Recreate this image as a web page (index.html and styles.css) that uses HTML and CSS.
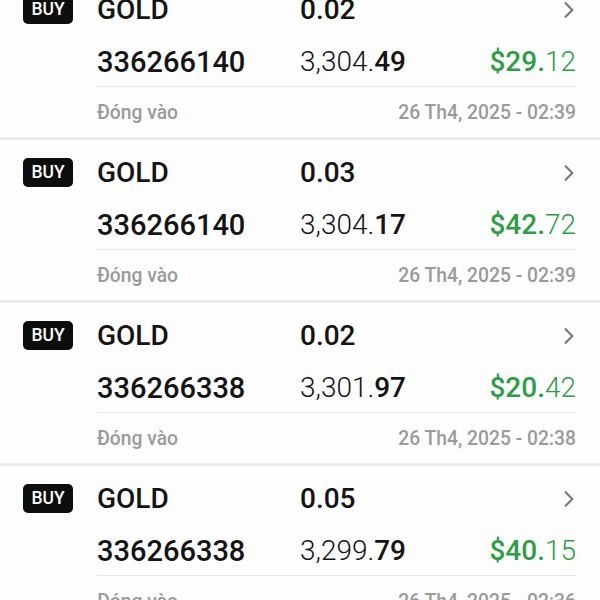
FILE: index.html
```html
<!DOCTYPE html>
<html lang="vi">

<head>
    <meta charset="UTF-8">
    <meta name="viewport" content="width=device-width, initial-scale=1.0">
    <title>Lịch sử giao dịch</title>
    <link rel="stylesheet" href="styles.css">
</head>

<body>
    <main class="history">

        <div class="trade">
            <span class="badge">BUY</span>
            <div class="trade-body">
                <div class="row">
                    <span class="symbol">GOLD</span>
                    <span class="volume">0.02</span>
                    <svg class="chevron" viewBox="0 0 10 16"><path d="M2 2 L8 8 L2 14" /></svg>
                </div>
                <div class="row row-price">
                    <span class="ticket">336266140</span>
                    <span class="price">3,304.<b>49</b></span>
                    <span class="profit"><b>$29.</b>12</span>
                </div>
                <div class="footer">
                    <span>Đóng vào</span>
                    <span>26 Th4, 2025 - 02:39</span>
                </div>
            </div>
        </div>

        <div class="trade">
            <span class="badge">BUY</span>
            <div class="trade-body">
                <div class="row">
                    <span class="symbol">GOLD</span>
                    <span class="volume">0.03</span>
                    <svg class="chevron" viewBox="0 0 10 16"><path d="M2 2 L8 8 L2 14" /></svg>
                </div>
                <div class="row row-price">
                    <span class="ticket">336266140</span>
                    <span class="price">3,304.<b>17</b></span>
                    <span class="profit"><b>$42.</b>72</span>
                </div>
                <div class="footer">
                    <span>Đóng vào</span>
                    <span>26 Th4, 2025 - 02:39</span>
                </div>
            </div>
        </div>

        <div class="trade">
            <span class="badge">BUY</span>
            <div class="trade-body">
                <div class="row">
                    <span class="symbol">GOLD</span>
                    <span class="volume">0.02</span>
                    <svg class="chevron" viewBox="0 0 10 16"><path d="M2 2 L8 8 L2 14" /></svg>
                </div>
                <div class="row row-price">
                    <span class="ticket">336266338</span>
                    <span class="price">3,301.<b>97</b></span>
                    <span class="profit"><b>$20.</b>42</span>
                </div>
                <div class="footer">
                    <span>Đóng vào</span>
                    <span>26 Th4, 2025 - 02:38</span>
                </div>
            </div>
        </div>

        <div class="trade">
            <span class="badge">BUY</span>
            <div class="trade-body">
                <div class="row">
                    <span class="symbol">GOLD</span>
                    <span class="volume">0.05</span>
                    <svg class="chevron" viewBox="0 0 10 16"><path d="M2 2 L8 8 L2 14" /></svg>
                </div>
                <div class="row row-price">
                    <span class="ticket">336266338</span>
                    <span class="price">3,299.<b>79</b></span>
                    <span class="profit"><b>$40.</b>15</span>
                </div>
                <div class="footer">
                    <span>Đóng vào</span>
                    <span>26 Th4, 2025 - 02:36</span>
                </div>
            </div>
        </div>

    </main>
</body>

</html>
```

FILE: styles.css
```css
* {
    padding: 0;
    margin: 0;
    box-sizing: border-box;
    font-family: Roboto, 'Noto Sans', sans-serif;
}

:root {
    --color-text: #141414;
    --color-muted: #9a9a9a;
    --color-green: #2e9d47;
    --color-line: #e6e6e6;
    --color-sep: #ececec;
}

body {
    background: #fdfdfd;
    color: var(--color-text);
    overflow: hidden;
    height: 600px;
}

.history {
    margin-top: -23px;
}

.trade {
    display: flex;
    padding: 18px 24px 12px 23px;
    border-bottom: 3px solid var(--color-sep);
}

.badge {
    width: 50px;
    height: 29px;
    border-radius: 5px;
    background: #0d0d0d;
    color: #fff;
    font-size: 17.5px;
    font-weight: 500;
    line-height: 29px;
    text-align: center;
    flex-shrink: 0;
}

.trade-body {
    flex: 1;
    margin-left: 24px;
}

.row {
    display: flex;
    align-items: center;
    height: 30px;
    font-size: 28px;
    line-height: 30px;
    font-weight: 500;
}

.symbol,
.ticket {
    width: 203px;
    flex-shrink: 0;
}

.ticket {
    font-size: 29px;
}

.volume,
.price {
    flex: 1;
}

.chevron {
    width: 12px;
    height: 18px;
    margin-right: 1px;
}

.chevron path {
    fill: none;
    stroke: #7a7a7a;
    stroke-width: 2;
    stroke-linecap: round;
    stroke-linejoin: round;
}

.row-price {
    margin-top: 22px;
    padding-bottom: 9px;
    height: 30px;
    border-bottom: 1px solid var(--color-line);
    box-sizing: content-box;
}

.price {
    font-weight: 300;
}

.price b {
    font-weight: 500;
}

.profit {
    color: var(--color-green);
    font-weight: 300;
}

.profit b {
    font-weight: 500;
}

.footer {
    display: flex;
    justify-content: space-between;
    margin-top: 14px;
    height: 24px;
    font-size: 19.3px;
    line-height: 24px;
    font-weight: 500;
    color: var(--color-muted);
}
```
